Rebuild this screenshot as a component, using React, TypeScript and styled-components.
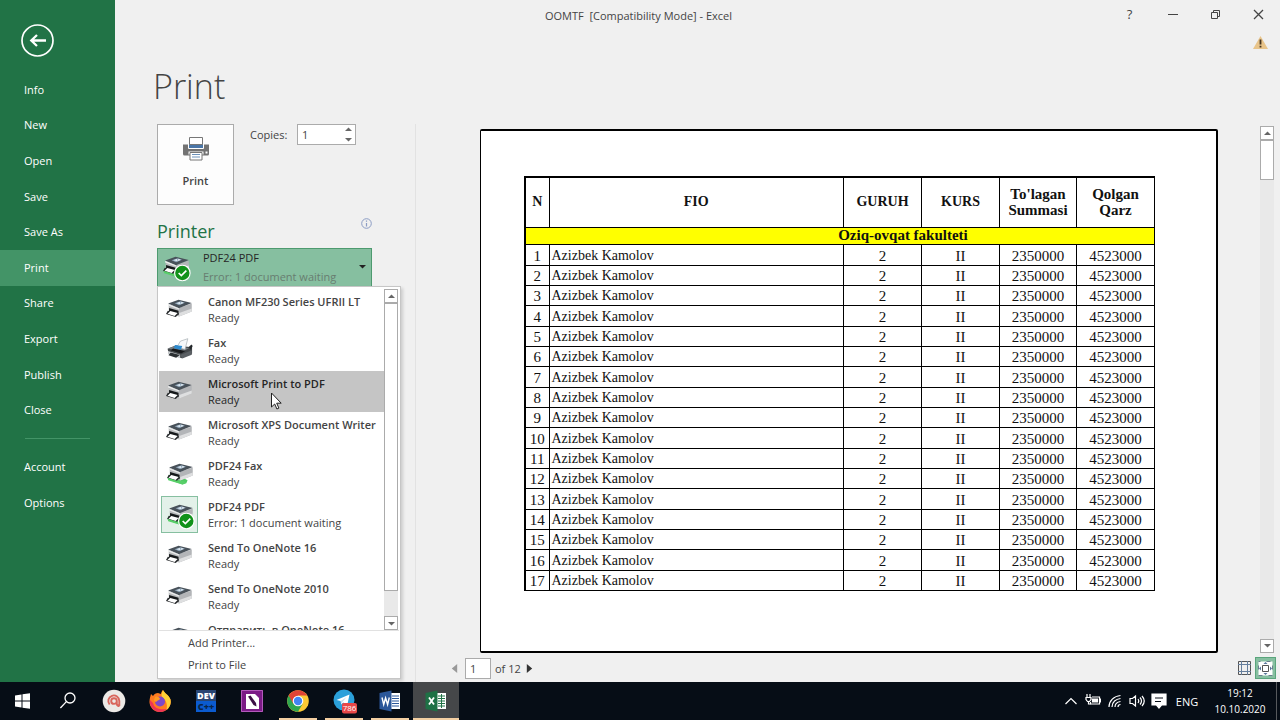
import React from "react";
import styled, { createGlobalStyle, css } from "styled-components";

const GlobalStyle = createGlobalStyle`
  *, *::before, *::after { box-sizing: border-box; }
  body { margin: 0; background: #f0f0f0; font-family: "Open Sans", "Noto Sans", sans-serif; font-size: 11px; color: #444; }
  button, input { font: inherit; color: inherit; margin: 0; padding: 0; }
  button { background: none; border: 0; }
  a { color: inherit; text-decoration: none; }
  ul { list-style: none; margin: 0; padding: 0; }
  svg { display: block; flex: none; }
`;

const Screen = styled.div`
  display: flex;
  flex-direction: column;
  min-height: 100vh;
`;
const Backstage = styled.div`
  flex: 1;
  display: flex;
`;

/* Sidebar */
const Sidebar = styled.nav`
  flex: none;
  width: 115px;
  padding-top: 24px;
  background: #217346;
  color: #fff;
`;
const BackButton = styled.button`
  display: block;
  margin: 0 0 15px 21px;
`;
const MenuList = styled.ul`
  display: flex;
  flex-direction: column;
  height: 356px;
`;
const MenuItem = styled.li`
  flex: 1;
  display: flex;
`;
const MenuLink = styled.a<{ $active?: boolean }>`
  flex: 1;
  display: flex;
  align-items: center;
  padding: 0 0 1px 24px;
  background: ${(p) => (p.$active ? "#439467" : "transparent")};
`;
const MenuRule = styled.hr`
  margin: 10px 25px;
  border: 0;
  border-top: 1px solid #439467;
`;
const AccountList = styled(MenuList)`
  height: 72px;
`;

/* Main area */
const Main = styled.main`
  flex: 1;
  min-width: 0;
  display: flex;
  flex-direction: column;
`;
const TitleBar = styled.header`
  display: flex;
  height: 30px;
  padding: 0 0 0 54px;
`;
const WindowTitle = styled.div`
  flex: 1;
  text-align: center;
  line-height: 32px;
`;
const WindowButton = styled.button`
  width: 43px;
  height: 28px;
  display: flex;
  align-items: center;
  justify-content: center;
  font-size: 13px;
`;
const Notice = styled.div`
  display: flex;
  justify-content: flex-end;
  height: 28px;
  padding: 6px 12px 0 0;
`;
const PageTitle = styled.h1`
  margin: 0;
  padding-left: 38px;
  height: 66px;
  font-size: 34px;
  line-height: 56px;
  font-weight: 300;
  color: #444;
`;
const Columns = styled.div`
  flex: 1;
  display: flex;
`;
const Settings = styled.section`
  flex: none;
  width: 301px;
  padding-left: 42px;
  border-right: 1px solid #e2e2e2;
`;
const PrintRow = styled.div`
  display: flex;
  align-items: flex-start;
`;
const PrintButton = styled.button`
  width: 77px;
  height: 81px;
  display: flex;
  flex-direction: column;
  align-items: center;
  gap: 11px;
  padding-top: 11px;
  background: #fdfdfd;
  border: 1px solid #ababab;
  font-weight: 600;
  line-height: 16px;
`;
const CopiesLabel = styled.label`
  width: 63px;
  padding-left: 16px;
  line-height: 22px;
`;
const Spinner = styled.div`
  display: flex;
  width: 59px;
  height: 21px;
  background: #fff;
  border: 1px solid #ababab;
`;
const SpinnerInput = styled.input`
  flex: 1;
  min-width: 0;
  padding-left: 4px;
  border: 0;
  background: none;
`;
const SpinnerButtons = styled.div`
  width: 14px;
  display: flex;
  flex-direction: column;
`;
const StepButton = styled.button`
  flex: 1;
  display: flex;
  align-items: center;
  justify-content: center;
`;
const SectionHead = styled.div`
  display: flex;
  justify-content: space-between;
  width: 215px;
  height: 43px;
  padding-top: 13px;
`;
const SectionTitle = styled.h2`
  margin: 0;
  font-size: 18px;
  line-height: 26px;
  font-weight: 400;
  color: #217346;
`;
const Picker = styled.div`
  position: relative;
  width: 215px;
`;
const PickerButton = styled.button`
  width: 100%;
  height: 39px;
  display: flex;
  align-items: center;
  gap: 12px;
  padding: 0 5px 2px 3px;
  text-align: left;
  background: #86bfa0;
  border: 1px solid #4d9a6f;
`;
const PickerText = styled.span`
  flex: 1;
  display: flex;
  flex-direction: column;
  line-height: 19px;
  white-space: nowrap;
  color: #262626;
`;
const PickerStatus = styled.span`
  color: #687d70;
`;
const Popup = styled.div`
  position: absolute;
  z-index: 2;
  top: 38px;
  left: 0;
  width: 244px;
  padding: 1px 1px 2px;
  background: #fff;
  border: 1px solid #c6c6c6;
  box-shadow: 2px 2px 3px rgba(0, 0, 0, 0.15);
`;
const PopupBody = styled.div`
  display: flex;
  height: 343px;
  margin-bottom: 1px;
  padding: 1px 1px 0 0;
  border-bottom: 1px solid #e1e1e1;
`;
const PrinterList = styled.div`
  flex: 1;
  min-width: 0;
  overflow: hidden;
`;
const PrinterOption = styled.button<{ $hot?: boolean }>`
  position: relative;
  display: flex;
  align-items: center;
  gap: 10px;
  width: 100%;
  height: 41px;
  padding-left: 2px;
  text-align: left;
  white-space: nowrap;
  ${(p) => p.$hot && css`background: #c5c5c5; color: #262626;`}
`;
const PrinterThumb = styled.span<{ $selected?: boolean }>`
  flex: none;
  width: 37px;
  height: 37px;
  display: flex;
  align-items: center;
  justify-content: center;
  border: 1px solid ${(p) => (p.$selected ? "#86bfa0" : "transparent")};
  background: ${(p) => (p.$selected ? "#e3f1e9" : "transparent")};
`;
const PrinterText = styled.span`
  display: flex;
  flex-direction: column;
  line-height: 16px;
`;
const PrinterName = styled.strong`
  font-weight: 600;
`;
const Pointer = styled.svg`
  position: absolute;
  left: 112px;
  top: 21px;
`;
const PopupAction = styled.button`
  display: block;
  width: 100%;
  height: 22px;
  padding-left: 29px;
  text-align: left;
  line-height: 22px;
`;

/* Scroll bars */
const ScrollBar = styled.div`
  flex: none;
  width: 14px;
  display: flex;
  flex-direction: column;
  background: #e9e9e9;
`;
const ScrollButton = styled.button`
  height: 14px;
  display: flex;
  align-items: center;
  justify-content: center;
  background: #fff;
  border: 1px solid #ababab;
`;
const ScrollTrack = styled.div`
  flex: 1;
`;
const ScrollThumb = styled.div<{ $share: number }>`
  height: ${(p) => p.$share}%;
  background: #fff;
  border: 1px solid #ababab;
`;

/* Preview */
const Preview = styled.section`
  flex: 1;
  min-width: 0;
  display: flex;
  flex-direction: column;
  justify-content: space-between;
`;
const PreviewArea = styled.div`
  display: flex;
  justify-content: space-between;
  gap: 42px;
  padding: 2px 6px 0 64px;
`;
const Paper = styled.div`
  flex: 1;
  margin-top: 3px;
  padding: 45px 61px 60px 43px;
  background: #fff;
  border: solid #000;
  border-width: 2px 2px 2px 1px;
  border-radius: 2px;
`;
const Sheet = styled.table`
  width: 100%;
  table-layout: fixed;
  border-collapse: collapse;
  border-top: 2px solid #000;
  border-left: 2px solid #000;
  font-family: "Liberation Serif", serif;
  font-size: 15px;
  line-height: 16px;
  color: #111;
`;
const HeadCell = styled.th<{ $w?: number; $caps?: boolean }>`
  width: ${(p) => (p.$w ? `${p.$w}px` : "auto")};
  height: 50px;
  padding: 0;
  border: 1px solid #000;
  font-size: ${(p) => (p.$caps ? 14 : 15)}px;
`;
const GroupCell = styled.th`
  height: 17px;
  padding: 0 0 0 126px;
  background: #ff0;
  border: 1px solid #000;
  line-height: 15px;
`;
const SheetRow = styled.tr`
  height: 20px;
  &:nth-child(3n + 1) { height: 21px; }
`;
const Cell = styled.td<{ $left?: boolean }>`
  padding: 2px 0 0 ${(p) => (p.$left ? 2 : 0)}px;
  border: 1px solid #000;
  text-align: ${(p) => (p.$left ? "left" : "center")};
  font-size: ${(p) => (p.$left ? 14 : 15)}px;
`;
const PageBar = styled.div`
  display: flex;
  align-items: center;
  height: 28px;
  padding: 0 4px 0 33px;
`;
const PageStep = styled.button`
  width: 10px;
  display: flex;
  justify-content: center;
`;
const PageLabel = styled.label`
  display: flex;
  align-items: center;
  gap: 4px;
  margin: 0 4px 0 6px;
`;
const PageInput = styled.input`
  width: 26px;
  height: 21px;
  padding-left: 4px;
  background: #fff;
  border: 1px solid #ababab;
`;
const ViewButton = styled.button<{ $on?: boolean }>`
  width: 21px;
  height: 22px;
  display: flex;
  align-items: center;
  justify-content: center;
  ${(p) => p.$on && css`background: #86bfa0; border: 1px solid #5aa57c;`}
`;
const Spring = styled.div`
  flex: 1;
`;

/* Taskbar */
const Taskbar = styled.footer`
  flex: none;
  display: flex;
  height: 38px;
  background: #060d16;
  color: #fff;
`;
const TaskButton = styled.button<{ $active?: boolean; $open?: boolean }>`
  width: 46px;
  display: flex;
  align-items: center;
  justify-content: center;
  background-color: ${(p) => (p.$active ? "#454749" : "transparent")};
  background-image: ${(p) => (p.$open ? "linear-gradient(#f3cfa2, #f3cfa2)" : "none")};
  background-repeat: no-repeat;
  background-position: center bottom;
  background-size: ${(p) => (p.$active ? "46px 2px" : "38px 2px")};
  &:first-child { width: 45px; }
`;
const Tray = styled.div`
  display: flex;
  align-items: center;
  margin-left: auto;
`;
const TrayButton = styled.button`
  width: 22px;
  height: 38px;
  display: flex;
  align-items: center;
  justify-content: center;
`;
const Language = styled.button`
  width: 34px;
`;
const Clock = styled.button`
  width: 72px;
  font-size: 10px;
  line-height: 16px;
`;
const ShowDesktop = styled.div`
  width: 4px;
  height: 38px;
  border-left: 1px solid #56595d;
`;

const Arrow = ({ dir, size = 7, color = "#666" }: { dir: "up" | "down" | "left" | "right"; size?: number; color?: string }) => {
  const d = { up: "M0 7 5 2l5 5z", down: "M0 3h10L5 8z", left: "M8 0v10L2 5z", right: "M2 0v10l6-5z" }[dir];
  return <svg width={size} height={size} viewBox="0 0 10 10"><path d={d} fill={color} /></svg>;
};

type PrinterKind = "plain" | "fax" | "green" | "ready";

const PrinterIcon = ({ kind }: { kind: PrinterKind }) => {
  const green = kind === "green" || kind === "ready";
  return (
    <svg width="30" height="30" viewBox="0 0 90 90" overflow="visible">
      {kind === "fax" ? (
        <g transform="translate(4 -3) scale(.92)">
          <path d="M4 45 30 34l54 6v20L50 76 8 62z" fill="#44484b" />
          <path d="M6 43 34 34l40 9-28 14z" fill="#777e83" />
          <path d="M22 44 62 52 48 60 14 50z" fill="#17191b" />
          <path d="M34 40 46 20l24-8-9 35z" fill="#f6f8fa" stroke="#9ca3a8" strokeWidth="2" />
          <path d="m28 33 24 3-5 12-22-5z" fill="#2d8bd0" />
          <path d="m5 52 40 12v12L8 64z" fill="#cfd3d6" />
          <path d="m14 57 30 8-12 9-25-8z" fill="#2c3033" />
          <path d="m45 65 38-15v14L52 77z" fill="#5b6064" />
          <path d="m73 39 9-8 4 5-6 12z" fill="#24282b" />
        </g>
      ) : (
        <g transform={green ? "translate(6 1) scale(.92)" : "translate(3 1) scale(.92)"}>
          {green && <path d="m3 54 10-6 42 14 12 6-4 10-12 4-42-15z" fill="#4fca63" />}
          <path d="m9 28 33 13v28L9 57z" fill="#b9bbbd" />
          <path d="m42 41 42-14v26L43 69z" fill="#b3b5b8" />
          <path d="m43 58 41-15v10L43 69z" fill="#dedfe0" />
          <path d="m7 27 34-13 43 11-42 17z" fill="#485159" />
          <path d="m28 26 19-7 15 5-19 8z" fill="#8fa6ba" />
          <path d="m34 26 11-4 3 7zm16-5 8 3-9 4z" fill="#e4edf4" />
          <path d="m7 28 35 14v4L7 33z" fill="#eceded" />
          <path d="m10 41 31 9v14l-31-8z" fill="#15181a" />
          <path d="m6 50 37 9-11 12L0 61z" fill="#25282a" />
          <path d="m14 51 24 7-10 9-23-7z" fill="#fff" />
          {green && <path d="m2 60 30 10 22 1 8 5-12 6L4 68z" fill="#58cf69" />}
        </g>
      )}
      {kind === "ready" && (
        <g>
          <circle cx="64" cy="63" r="25" fill="#fff" />
          <circle cx="64" cy="63" r="21.500" fill="#11921a" />
          <path d="m53 63 8 8 15-15" fill="none" stroke="#fff" strokeWidth="5" />
        </g>
      )}
    </svg>
  );
};

const menu = ["Info", "New", "Open", "Save", "Save As", "Print", "Share", "Export", "Publish", "Close"];
const printers: { name: string; status: string; kind: PrinterKind }[] = [
  { name: "Canon MF230 Series UFRII LT", status: "Ready", kind: "plain" },
  { name: "Fax", status: "Ready", kind: "fax" },
  { name: "Microsoft Print to PDF", status: "Ready", kind: "plain" },
  { name: "Microsoft XPS Document Writer", status: "Ready", kind: "plain" },
  { name: "PDF24 Fax", status: "Ready", kind: "green" },
  { name: "PDF24 PDF", status: "Error: 1 document waiting", kind: "ready" },
  { name: "Send To OneNote 16", status: "Ready", kind: "plain" },
  { name: "Send To OneNote 2010", status: "Ready", kind: "plain" },
  { name: "Отправить в OneNote 16", status: "", kind: "plain" },
];
const hovered = "Microsoft Print to PDF";
const selected = "PDF24 PDF";
const students = Array.from({ length: 17 }, (_, i) => ({
  n: i + 1, name: "Azizbek Kamolov", group: 2, year: "II", paid: 2350000, due: 4523000,
}));

const PrinterPicker = () => (
  <Picker>
    <PickerButton aria-haspopup="listbox" aria-expanded="true">
      <PrinterIcon kind="ready" />
      <PickerText>
        <span>PDF24 PDF</span>
        <PickerStatus>Error: 1 document waiting</PickerStatus>
      </PickerText>
      <Arrow dir="down" color="#222" />
    </PickerButton>
    <Popup>
      <PopupBody>
        <PrinterList role="listbox" aria-label="Printers">
          {printers.map((p) => (
            <PrinterOption key={p.name} role="option" aria-selected={p.name === selected} $hot={p.name === hovered}>
              <PrinterThumb $selected={p.name === selected}><PrinterIcon kind={p.kind} /></PrinterThumb>
              <PrinterText>
                <PrinterName>{p.name}</PrinterName>
                <span>{p.status || "\u00a0"}</span>
              </PrinterText>
              {p.name === hovered && (
                <Pointer width="11" height="18" viewBox="0 0 11 18">
                  <path d="M.5 1v14l3.200-3 2.200 5 2-.9-2.200-4.900h4.500z" fill="#fff" stroke="#222" />
                </Pointer>
              )}
            </PrinterOption>
          ))}
        </PrinterList>
        <ScrollBar>
          <ScrollButton aria-label="Scroll printers up"><Arrow dir="up" /></ScrollButton>
          <ScrollTrack><ScrollThumb $share={92} /></ScrollTrack>
          <ScrollButton aria-label="Scroll printers down"><Arrow dir="down" /></ScrollButton>
        </ScrollBar>
      </PopupBody>
      <PopupAction>Add Printer...</PopupAction>
      <PopupAction>Print to File</PopupAction>
    </Popup>
  </Picker>
);

const StudentSheet = () => (
  <Sheet>
    <thead>
      <tr>
        <HeadCell $w={24} $caps>N</HeadCell>
        <HeadCell $caps>FIO</HeadCell>
        <HeadCell $w={78} $caps>GURUH</HeadCell>
        <HeadCell $w={78} $caps>KURS</HeadCell>
        <HeadCell $w={77}>To'lagan<br />Summasi</HeadCell>
        <HeadCell $w={78}>Qolgan<br />Qarz</HeadCell>
      </tr>
      <tr><GroupCell colSpan={6}>Oziq-ovqat fakulteti</GroupCell></tr>
    </thead>
    <tbody>
      {students.map((s) => (
        <SheetRow key={s.n}>
          <Cell>{s.n}</Cell>
          <Cell $left>{s.name}</Cell>
          <Cell>{s.group}</Cell>
          <Cell>{s.year}</Cell>
          <Cell>{s.paid}</Cell>
          <Cell>{s.due}</Cell>
        </SheetRow>
      ))}
    </tbody>
  </Sheet>
);

const taskIcons: { label: string; open?: boolean; active?: boolean; art: React.ReactNode }[] = [
  { label: "Start", art: <path d="M4 6.400 10.500 5.500v6H4zM11.500 5.300 19 4.300v7.200h-7.500zM4 12.500h6.500v6L4 17.600zM11.500 12.500H19v7.200l-7.500-1z" fill="#fff" /> },
  { label: "Search", art: <g fill="none" stroke="#fff" strokeWidth="1.300"><circle cx="14" cy="9" r="5" /><path d="m10.400 12.600-6 6.400" /></g> },
  { label: "Browser", art: <g><circle cx="12" cy="12" r="11.300" fill="#ece9e6" /><path d="M7.600 15.500A5.500 5.500 0 1 1 17.300 12v5M14.800 12a2.800 2.800 0 1 0-2.800 2.900c1.500 0 2.800-1 2.800-2.900v3q.3 2 2.700 2" fill="none" stroke="#d9665c" strokeWidth="1.900" /></g> },
  {
    label: "Firefox", art: (
      <g>
        <path d="M3 5l2 2c1-2 3-3 5-3 1 .2 2 .6 3 1 .2-2 1-3 2-4 1 3 6 5 7.500 9.500C24 17 19 23 12 23 6 23 1.500 18 1.500 13c0-3 .8-5.500 1.500-8z" fill="#ff7b20" />
        <path d="M15 1c1 3 6 5 7.500 9.500 1 5-1.500 8.500-4 10.500 1-4 .5-9-3.500-12-2-1.500-2-4 0-8z" fill="#ffd036" />
        <path d="M2 11c-1 6 4 12 10 12 3 0 5-1 7-3-6 1-13 0-14-6z" fill="#ee3456" />
        <circle cx="12" cy="12.500" r="5" fill="#7e48c9" />
        <path d="M7 8c2-1 4 0 5 1.500 0 1.500-2 1.500-3 2.500-1 2-3 0-3-1z" fill="#ff9a24" />
      </g>
    ),
  },
  {
    label: "Dev-C++", art: (
      <g>
        <path d="M2 1h20v11H2z" fill="#294674" /><path d="M2 12h20v11H2z" fill="#0b5bd0" />
        <g fontFamily="Open Sans, sans-serif" fontWeight="800" textAnchor="middle" fontSize="9">
          <text x="12" y="10" fill="#fff">DEV</text><text x="12" y="21" fill="#082448">C++</text>
        </g>
      </g>
    ),
  },
  { label: "Editor", art: <g><path d="M1 1h22v22H1z" fill="#7b1a86" /><path d="M1.500 1.500h21v21h-21z" fill="none" stroke="#b25abb" /><path d="M6 5h9l4 4v11H6z" fill="#fff" /><path d="m8 7.500 2.500-1 5.500 7.500.5 3.500-3-1.500z" fill="#3c0f45" /></g> },
  {
    label: "Chrome", open: true, art: (
      <g>
        <circle cx="12" cy="12" r="10.800" fill="#fcc934" />
        <path d="M12 12 2.650 6.600A10.800 10.800 0 0 0 12 22.800L16.700 14.700z" fill="#2ea650" />
        <path d="M12 12 7.300 14.700 2.650 6.600A10.800 10.800 0 0 1 21.350 6.600H12z" fill="#e04436" />
        <circle cx="12" cy="12" r="5.300" fill="#fff" /><circle cx="12" cy="12" r="4.200" fill="#4285f4" />
      </g>
    ),
  },
  {
    label: "Telegram", open: true, art: (
      <g>
        <circle cx="12" cy="11" r="10.500" fill="#2ba0da" />
        <path d="m4.500 11 13-5.500-2.300 11-4-3-2 2-.5-3.500z" fill="#fff" /><path d="m8.700 12 6-4-4.500 5.200-1 2.300z" fill="#c5dff0" />
        <rect x="10" y="14" width="15" height="10.500" rx="2" fill="#e84848" />
        <text x="17.500" y="22" fontSize="8" textAnchor="middle" fill="#fff" fontFamily="Open Sans, sans-serif">786</text>
      </g>
    ),
  },
  {
    label: "Word", open: true, art: (
      <g>
        <path d="M12 4h10v16H12z" fill="#fff" /><path d="M14 7h7M14 9.500h7M14 12h7M14 14.500h7M14 17h7" stroke="#2b579a" />
        <path d="M1.500 4 13.500 1.500v21L1.500 20z" fill="#2b579a" /><path d="m4 8.500 1.700 7L7.600 9l2 6.500 1.700-7" fill="none" stroke="#fff" strokeWidth="1.400" />
      </g>
    ),
  },
  {
    label: "Excel", open: true, active: true, art: (
      <g>
        <path d="M12 4h10v16H12z" fill="#fff" /><path d="M14 7h7M14 9.500h7M14 12h7M14 14.500h7M14 17h7M17.500 5v14" stroke="#217346" />
        <path d="M1.500 4 13.500 1.500v21L1.500 20z" fill="#1e7145" /><path d="m5 8.500 5 7m0-7-5 7" fill="none" stroke="#fff" strokeWidth="1.800" />
      </g>
    ),
  },
];

const trayIcons: { label: string; art: React.ReactNode }[] = [
  { label: "Show hidden icons", art: <path d="m2.500 11 5.500-5.500 5.500 5.500" /> },
  { label: "Battery", art: <g><path d="M7 4h7.500v7H5.500V9M14.500 6h1.200v3h-1.200" /><path d="M2 1v3m3-3v3M1 4.500h5v2L4.500 8.500h-2L1 6.500zM3.500 8.500v2.500h2" /><path d="M7.500 6h5v3h-5z" fill="#fff" /></g> },
  { label: "Wi-Fi", art: <g><path d="M2 14C2 8 7 3 13.500 2.500M5 14c0-5 4-8 8.500-8.500M8 14c0-3 2.500-5 5.500-5.500M11 14c0-1.500 1-2.500 2.500-2.500" /></g> },
  { label: "Volume", art: <path d="M1 5.500h2.500L6.500 3v10L3.500 10.500H1zM9 6q1.500 2 0 4M11 4.500q3 3.500 0 7M13 3q4.500 5 0 10" /> },
  { label: "Notifications", art: <g><path d="M1 1h14v11H10.500L8 15l-2.500-3H1z" fill="#fff" /><path d="M4 5h8M4 8.500h6" stroke="#060d16" /></g> },
];

export default function App() {
  return (
    <Screen>
      <GlobalStyle />
      <Backstage>
        <Sidebar>
          <BackButton aria-label="Back">
            <svg width="33" height="33" viewBox="0 0 33 33" fill="none" stroke="#fff">
              <circle cx="16.500" cy="16.500" r="15.500" strokeWidth="1.700" />
              <path d="M25 16.500H10M16 11l-5.700 5.500L16 22" strokeWidth="2.300" />
            </svg>
          </BackButton>
          <MenuList>
            {menu.map((m) => <MenuItem key={m}><MenuLink href="#" $active={m === "Print"}>{m}</MenuLink></MenuItem>)}
          </MenuList>
          <MenuRule />
          <AccountList>
            <MenuItem><MenuLink href="#">Account</MenuLink></MenuItem>
            <MenuItem><MenuLink href="#">Options</MenuLink></MenuItem>
          </AccountList>
        </Sidebar>
        <Main>
          <TitleBar>
            <WindowTitle>OOMTF&nbsp; [Compatibility Mode] - Excel</WindowTitle>
            <WindowButton>?</WindowButton>
            <WindowButton aria-label="Minimize"><svg width="11" height="11"><path d="M1 5.500h10" stroke="#444" /></svg></WindowButton>
            <WindowButton aria-label="Restore"><svg width="11" height="11" fill="none" stroke="#444"><path d="M1.500 3.500h6v6h-6zM3.500 3V1.500h6v6H8" /></svg></WindowButton>
            <WindowButton aria-label="Close"><svg width="11" height="11"><path d="m1 1 9 9m0-9-9 9" stroke="#444" strokeWidth="1.300" /></svg></WindowButton>
          </TitleBar>
          <Notice>
            <svg width="15" height="13" viewBox="0 0 15 13"><path d="M7.500 0 15 13H0z" fill="#e8c48a" /><path d="M7.500 3.500v5M7.500 9.700v1.800" stroke="#463520" strokeWidth="1.800" /></svg>
          </Notice>
          <PageTitle>Print</PageTitle>
          <Columns>
            <Settings>
              <PrintRow>
                <PrintButton>
                  <svg width="28" height="26" viewBox="0 0 28 26">
                    <path d="M1 8.500h26V18q0 1.500-1.500 1.500h-23Q1 19.500 1 18z" fill="#737373" />
                    <path d="M6.500 7h15v5.500h-15z" fill="#4a76a8" stroke="#fff" />
                    <path d="M7.500 1.500h13v7h-13z" fill="#fff" stroke="#777" />
                    <path d="M6.500 15.500h15v3h-15z" fill="#fff" />
                    <path d="M8 16.500h12v7.500H8z" fill="#fff" stroke="#777" />
                    <path d="M10 18.500h8M10 21h8" stroke="#6c91b9" /><path d="M23.500 15.500h2v2h-2z" fill="#fff" />
                  </svg>
                  Print
                </PrintButton>
                <CopiesLabel htmlFor="copies">Copies:</CopiesLabel>
                <Spinner>
                  <SpinnerInput id="copies" defaultValue="1" />
                  <SpinnerButtons>
                    <StepButton aria-label="More copies"><Arrow dir="up" /></StepButton>
                    <StepButton aria-label="Fewer copies"><Arrow dir="down" /></StepButton>
                  </SpinnerButtons>
                </Spinner>
              </PrintRow>
              <SectionHead>
                <SectionTitle>Printer</SectionTitle>
                <svg width="11" height="11" viewBox="0 0 11 11" fill="none" stroke="#8b9cc4">
                  <circle cx="5.500" cy="5.500" r="4.800" /><path d="M5.500 5v3.500M5.500 2.500v1.300" strokeWidth="1.200" />
                </svg>
              </SectionHead>
              <PrinterPicker />
            </Settings>
            <Preview>
              <PreviewArea>
                <Paper><StudentSheet /></Paper>
                <ScrollBar>
                  <ScrollButton aria-label="Scroll pages up"><Arrow dir="up" /></ScrollButton>
                  <ScrollTrack><ScrollThumb $share={8} /></ScrollTrack>
                  <ScrollButton aria-label="Scroll pages down"><Arrow dir="down" /></ScrollButton>
                </ScrollBar>
              </PreviewArea>
              <PageBar>
                <PageStep aria-label="Previous page"><Arrow dir="left" size={9} color="#999" /></PageStep>
                <PageLabel><PageInput defaultValue="1" aria-label="Page" />of 12</PageLabel>
                <PageStep aria-label="Next page"><Arrow dir="right" size={9} color="#333" /></PageStep>
                <Spring />
                <ViewButton aria-label="Show margins">
                  <svg width="13" height="14" fill="none" stroke="#667f9d"><path d="M.5 .5h12v13H.5z" stroke="#555" /><path d="M3.500 0v14M9.500 0v14M0 3.500h13M0 10.500h13" /></svg>
                </ViewButton>
                <ViewButton $on aria-label="Zoom to page">
                  <svg width="15" height="15" viewBox="0 0 15 15"><path d="M.5 .5h14v14H.5z" fill="#fff" stroke="#6b7f8d" strokeDasharray="4 6" strokeDashoffset="2" /><path d="M4.500 4.500h6v6h-6z" fill="#fff" stroke="#555" /><path d="M7.500 1 9.500 3h-4zM7.500 14l2-2h-4zM1 7.500l2-2v4zM14 7.500l-2-2v4z" fill="#557398" /></svg>
                </ViewButton>
              </PageBar>
            </Preview>
          </Columns>
        </Main>
      </Backstage>
      <Taskbar>
        {taskIcons.map((t) => (
          <TaskButton key={t.label} aria-label={t.label} $open={t.open} $active={t.active}>
            <svg width="24" height="24" viewBox="0 0 24 24" overflow="visible">{t.art}</svg>
          </TaskButton>
        ))}
        <Tray>
          {trayIcons.map((t) => (
            <TrayButton key={t.label} aria-label={t.label}>
              <svg width="16" height="16" viewBox="0 0 16 16" fill="none" stroke="#fff" strokeWidth="1.200">{t.art}</svg>
            </TrayButton>
          ))}
          <Language>ENG</Language>
          <Clock>19:12<br />10.10.2020</Clock>
          <ShowDesktop />
        </Tray>
      </Taskbar>
    </Screen>
  );
}
